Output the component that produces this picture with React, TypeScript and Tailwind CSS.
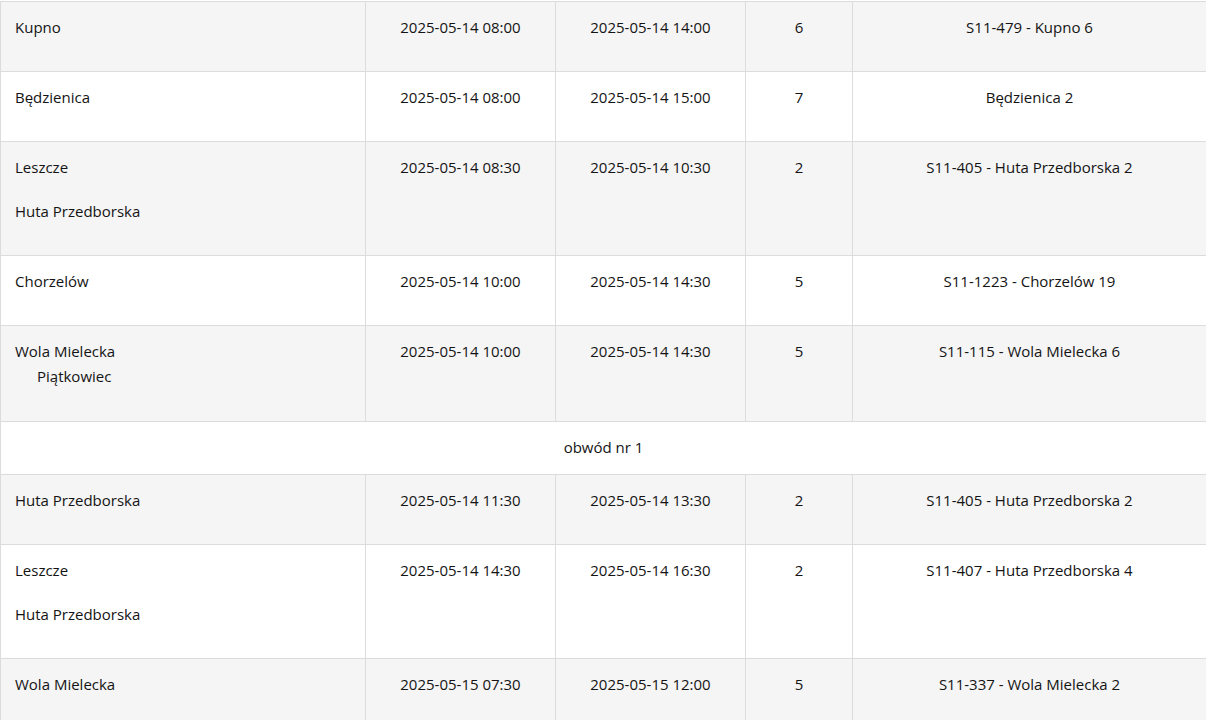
import React from "react";

type Row = {
  names: React.ReactNode[];
  start: string;
  end: string;
  n: string;
  loc: string;
};

const rows1: Row[] = [
  { names: ["Kupno"], start: "2025-05-14 08:00", end: "2025-05-14 14:00", n: "6", loc: "S11-479 - Kupno 6" },
  { names: ["Będzienica"], start: "2025-05-14 08:00", end: "2025-05-14 15:00", n: "7", loc: "Będzienica 2" },
  { names: ["Leszcze", "Huta Przedborska"], start: "2025-05-14 08:30", end: "2025-05-14 10:30", n: "2", loc: "S11-405 - Huta Przedborska 2" },
  { names: ["Chorzelów"], start: "2025-05-14 10:00", end: "2025-05-14 14:30", n: "5", loc: "S11-1223 - Chorzelów 19" },
  {
    names: [
      <span key="w" className="block leading-[25px]">
        Wola Mielecka
        <br />
        <span className="pl-[22px]">Piątkowiec</span>
      </span>,
    ],
    start: "2025-05-14 10:00",
    end: "2025-05-14 14:30",
    n: "5",
    loc: "S11-115 - Wola Mielecka 6",
  },
];

const rows2: Row[] = [
  { names: ["Huta Przedborska"], start: "2025-05-14 11:30", end: "2025-05-14 13:30", n: "2", loc: "S11-405 - Huta Przedborska 2" },
  { names: ["Leszcze", "Huta Przedborska"], start: "2025-05-14 14:30", end: "2025-05-14 16:30", n: "2", loc: "S11-407 - Huta Przedborska 4" },
  { names: ["Wola Mielecka"], start: "2025-05-15 07:30", end: "2025-05-15 12:00", n: "5", loc: "S11-337 - Wola Mielecka 2" },
];

const td = "border border-[#dcdcdc] pt-[13px] pb-[12px] align-top";

function DataRow({ r, gray }: { r: Row; gray: boolean }) {
  return (
    <tr className={gray ? "bg-[#f5f5f5]" : "bg-white"}>
      <td className={`${td} pl-[14px] text-left`}>
        {r.names.map((nm, i) => (
          <p key={i} className="mb-[20px]">
            {nm}
          </p>
        ))}
      </td>
      <td className={`${td} text-center`}>
        <p className="mb-[20px]">{r.start}</p>
      </td>
      <td className={`${td} text-center`}>
        <p className="mb-[20px]">{r.end}</p>
      </td>
      <td className={`${td} text-center`}>
        <p className="mb-[20px]">{r.n}</p>
      </td>
      <td className={`${td} text-center`}>
        <p className="mb-[20px]">{r.loc}</p>
      </td>
    </tr>
  );
}

export default function App() {
  return (
    <div
      className="w-[1206px] h-[720px] overflow-hidden bg-white text-[#141414] text-[15px] leading-[24px]"
      style={{ fontFamily: '"Open Sans", "Noto Sans", sans-serif' }}
    >
      <table className="w-[1206px] border-collapse table-fixed mt-[1px]">
        <colgroup>
          <col className="w-[365px]" />
          <col className="w-[190px]" />
          <col className="w-[190px]" />
          <col className="w-[107px]" />
          <col className="w-[354px]" />
        </colgroup>
        <tbody>
          {rows1.map((r, i) => (
            <DataRow key={i} r={r} gray={i % 2 === 0} />
          ))}
          <tr className="bg-white">
            <td colSpan={5} className="border border-[#dcdcdc] pt-[13px] pb-[15px] text-center">
              obwód nr 1
            </td>
          </tr>
          {rows2.map((r, i) => (
            <DataRow key={i} r={r} gray={i % 2 === 0} />
          ))}
        </tbody>
      </table>
    </div>
  );
}
